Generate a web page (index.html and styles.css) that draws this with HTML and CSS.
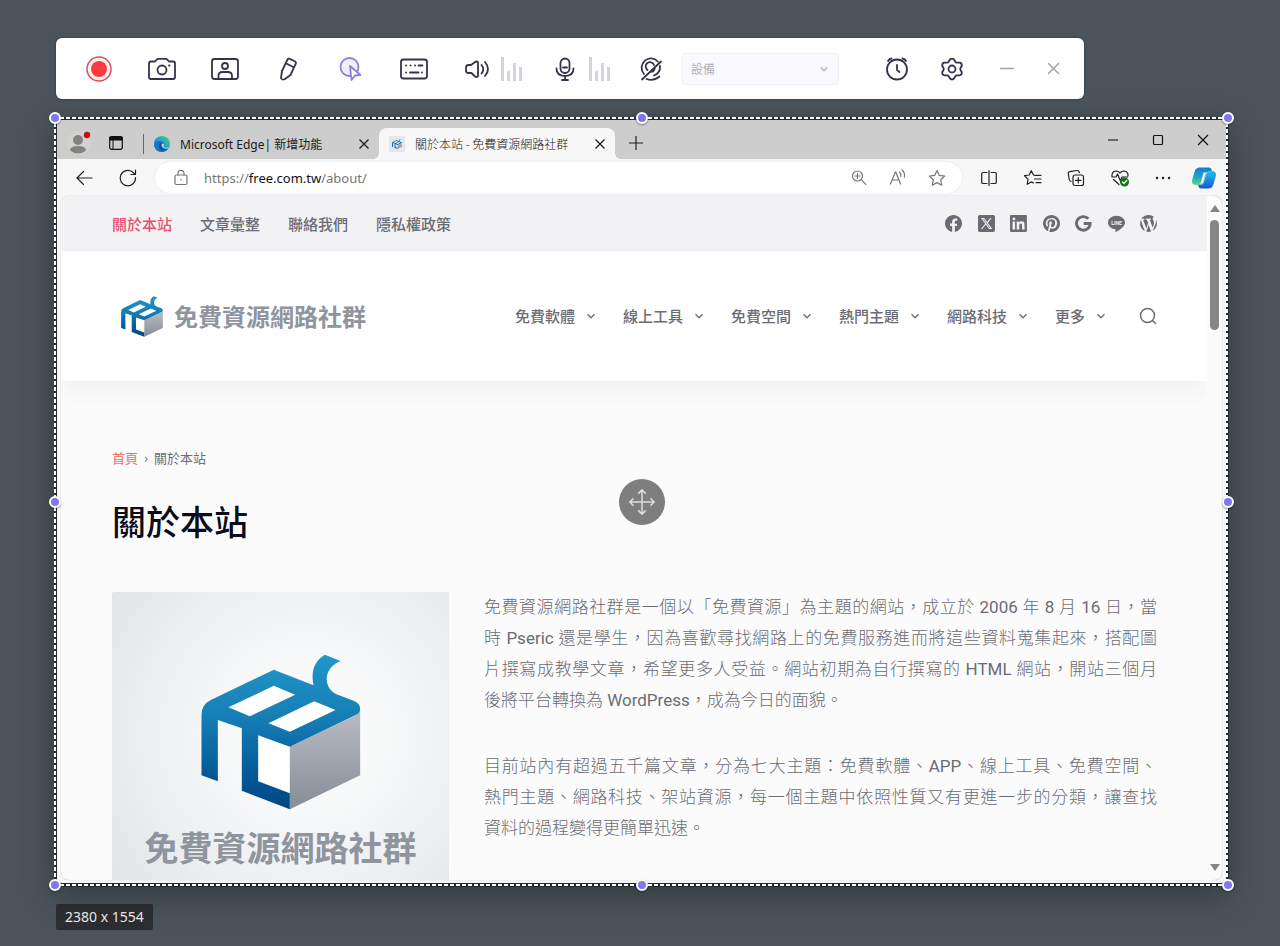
FILE: index.html
```html
<!DOCTYPE html>
<html lang="zh-Hant">
<head>
<meta charset="utf-8">
<meta name="viewport" content="width=device-width, initial-scale=1">
<title>關於本站 - 免費資源網路社群</title>
<link rel="stylesheet" href="styles.css">
</head>
<body>
<svg class="defs" aria-hidden="true">
  <defs>
    <linearGradient id="blue" x1="0" y1="0" x2="0" y2="1"><stop offset="0" stop-color="#2196cb"/><stop offset=".4" stop-color="#167fb4"/><stop offset=".85" stop-color="#005192"/><stop offset="1" stop-color="#00487f"/></linearGradient>
    <linearGradient id="silver" x1="0" y1="0" x2="0" y2="1"><stop offset="0" stop-color="#bcbdc4"/><stop offset="1" stop-color="#858d98"/></linearGradient>
    <linearGradient id="edge" x1="0" y1="1" x2="1" y2="0"><stop offset="0" stop-color="#0c59a4"/><stop offset=".5" stop-color="#1b9de2"/><stop offset="1" stop-color="#5bd64c"/></linearGradient>
    <linearGradient id="copA" x1="0" y1="0" x2="0" y2="1"><stop offset="0" stop-color="#1b78d6"/><stop offset=".5" stop-color="#17a5c4"/><stop offset="1" stop-color="#62d38b"/></linearGradient>
    <linearGradient id="copB" x1="0" y1="0" x2="0" y2="1"><stop offset="0" stop-color="#1fc5e8"/><stop offset="1" stop-color="#1b55d8"/></linearGradient>
    <symbol id="cube" viewBox="306 220 479 468">
      <path fill="#fff" d="M388 380L524 310 715 388 572 498V650L470 610V460Z"/>
      <path fill="url(#silver)" d="M572 498L772 403Q783 396 783 384V584L572 686Z"/>
      <path fill="url(#blue)" fill-rule="evenodd" d="M356 602L307 584V402Q307 372 335 358L524 267 643 314Q630 250 677 222L724 241C670 262 672 322 712 341L765 361Q783 369 783 384 783 397 770 403L572 498 477 464V602L572 638V686L428 630V443L356 418ZM524 315L388 380 452 407 588 342ZM645 362L508 428 572 453 709 388Z"/>
    </symbol>
    <symbol id="chev" viewBox="0 0 10 10"><path d="M1.500 3.200L5 6.800 8.500 3.200" fill="none" stroke="currentColor" stroke-width="1.300"/></symbol>
    <symbol id="x" viewBox="0 0 12 12"><path d="M1.500 1.500l9 9m0-9l-9 9" fill="none" stroke="currentColor" stroke-width="1.300"/></symbol>
  </defs>
</svg>

<div class="recorder" role="toolbar" aria-label="Recorder">
  <div class="tools">
    <button class="tool" aria-label="Record"><svg viewBox="0 0 30 30"><circle cx="15" cy="15" r="12" fill="#fdf1f1" stroke="#d9505a" stroke-width="1.500"/><circle cx="15" cy="15" r="8" fill="#ff3b41" stroke="none"/></svg></button>
    <button class="tool" aria-label="Screenshot"><svg viewBox="0 0 30 30"><path d="M4 7.500h4l2.500-2.700h9L22 7.500h4q2 0 2 2V23q0 2-2 2H4q-2 0-2-2V9.500q0-2 2-2z"/><circle cx="15" cy="16" r="4.500"/><path d="M22 11.500h.5"/></svg></button>
    <button class="tool" aria-label="Webcam window"><svg viewBox="0 0 30 30"><rect x="2" y="5" width="26" height="20" rx="2.500"/><circle cx="15" cy="12" r="3"/><path d="M8.500 25v-3q0-4 4-4h5.500q4 0 4 4v3"/></svg></button>
    <button class="tool" aria-label="Pen"><svg viewBox="0 0 30 30"><path d="M14.500 5.500q.8-1.300 2.300-.6l5.400 2.600q1.300.7.600 2.200L17.500 21l-5.500 4q-3 1.500-4-1l1-7zM12.800 9.300l8 4"/></svg></button>
    <button class="tool active" aria-label="Cursor effects"><svg viewBox="0 0 30 30"><circle cx="13.500" cy="13" r="9" fill="#f1effb"/><path fill="#fff" d="M14 12l10.500 9-5.500.5L15.500 26z"/></svg></button>
    <button class="tool" aria-label="Keystrokes"><svg viewBox="0 0 30 30"><rect x="2" y="5.500" width="26" height="19" rx="2.500"/><path d="M7 11.500h.1m4.400 0h.1m4.400 0h.1m3.400 0h4M7 18.500h.1m3.900 0h8.500m3.400 0h.1"/></svg></button>
    <div class="audio">
      <button class="tool" aria-label="System sound"><svg viewBox="0 0 30 30"><path d="M12.500 8.500q2.500-2 3.500 0v13.500q-1 2-3.500 0L9.500 19H6.500Q4 19 4 16.500v-2.500Q4 11 6.500 11h2.500zM19.500 11q3.500 4.300 0 8.500M23 8q6 7 0 14"/></svg></button>
      <svg class="bars" viewBox="0 0 22 24"><path d="M2.500 0v24M8.500 14v10M14.500 6v18M20.500 10v14"/></svg>
    </div>
  </div>
  <div class="tools mid">
    <div class="audio">
      <button class="tool" aria-label="Microphone"><svg viewBox="0 0 30 30"><rect x="10.500" y="4.500" width="9" height="14.500" rx="4.500"/><path d="M13 13.500h4M6.500 14.500q0 7.500 8.500 7.500t8.500-7.500M15 22v4M12 26h6"/></svg></button>
      <svg class="bars" viewBox="0 0 22 24"><path d="M2.500 0v24M8.500 14v10M14.500 6v18M20.500 10v14"/></svg>
    </div>
    <button class="tool" aria-label="Webcam off"><svg viewBox="0 0 30 30"><path d="M8 20A9.300 9.300 0 1 1 21.800 7.500M24 12q.5 7-6 9.500M11.500 16a4.300 4.300 0 1 1 6.500-5M18.800 14q-.5 3.500-4 3.800M6 25.500L25 7.500M10.500 25q7 2.500 13-2.500"/></svg></button>
  </div>
  <span class="device"><select disabled aria-label="設備"><option>設備</option></select><svg class="chev"><use href="#chev"/></svg></span>
  <div class="tools end">
    <button class="tool" aria-label="Schedule"><svg viewBox="0 0 30 30"><circle cx="15" cy="15.500" r="10"/><path d="M15 11v5l2.500 2M6 7q1-2 3.500-2.500M24 7q-1-2-3.500-2.500"/></svg></button>
    <button class="tool" aria-label="Settings"><svg viewBox="0 0 30 30"><circle cx="15" cy="15" r="3.500"/><path d="M13 5.500q2-1.800 4 0l1.300 2.300q.7 1 2 .8h2.500q2.300.7 2 3.200l-1.300 2.200q-.6 1 0 2l1.300 2.200q.3 2.500-2 3.200h-2.500q-1.300-.2-2 .8L17 24.500q-2 1.800-4 0l-1.300-2.300q-.7-1-2-.8H7.200q-2.300-.7-2-3.200L6.500 16q.6-1 0-2l-1.300-2.200q-.3-2.500 2-3.200h2.500q1.300.2 2-.8z"/></svg></button>
    <div class="wincontrols">
      <button class="tool faint" aria-label="Minimize"><svg viewBox="0 0 30 30"><path d="M8.500 14.500h13"/></svg></button>
      <button class="tool faint" aria-label="Close"><svg viewBox="0 0 30 30"><path d="M10.500 9.500l10 10m0-10l-10 10"/></svg></button>
    </div>
  </div>
</div>

<div class="frame">
  <div class="browser">
    <div class="tabstrip">
      <button class="avatar" aria-label="Profile"><svg viewBox="0 0 24 24"><circle cx="12" cy="12" r="12" fill="#d3d2d0"/><circle cx="11" cy="9" r="5" fill="#85827e"/><path d="M3 19.500q0-4.500 8-4.500t8 4.500q-3.500 3-8 3t-8-3z" fill="#85827e"/><circle cx="20" cy="4" r="3.200" fill="#c50f1f"/></svg></button>
      <button class="ico" aria-label="Workspaces"><svg viewBox="0 0 16 16"><rect x="1.700" y="1.700" width="12.600" height="12.600" rx="2" fill="none" stroke="#111" stroke-width="1.200"/><path d="M1.700 2h12.600v3H1.700z" fill="#111" stroke="#111"/><path d="M5 5v9" stroke="#111"/></svg></button>
      <div class="tab">
        <svg class="fav" viewBox="0 0 16 16"><circle cx="8" cy="8" r="8" fill="url(#edge)"/><path d="M.3 8Q3 3.800 7.500 5.200 10.500 6.500 10 9 9 10.300 10 11q3 1.200 5.300-.8Q13 15.800 8 16 0 15.500.3 8z" fill="#1675c5"/><path d="M5 10q0-3 3-3.500Q6.500 9 8 11t6 1.500Q9 16 6.500 13.500 5 12 5 10z" fill="#0d4fa0"/><path d="M8 7.500q2.500 0 2 2-1 1.300 0 1.700 2.500 1 5-.5l-1 1.800Q10 13.500 8 11 7 9 8 7.500z" fill="#cdcdcd"/></svg>
        <span class="tabname">Microsoft Edge| 新增功能</span>
        <button class="close" aria-label="Close tab"><svg><use href="#x"/></svg></button>
      </div>
      <div class="tab current">
        <span class="fav cubefav"><svg><use href="#cube"/></svg></span>
        <span class="tabname">關於本站 - 免費資源網路社群</span>
        <button class="close" aria-label="Close tab"><svg><use href="#x"/></svg></button>
      </div>
      <button class="ico plus" aria-label="New tab"><svg viewBox="0 0 16 16"><path d="M8 1v14M1 8h14" stroke="#222" stroke-width="1.200"/></svg></button>
      <div class="syscontrols">
        <button class="ico" aria-label="Minimize"><svg viewBox="0 0 16 16"><path d="M3 8h10" stroke="#333" stroke-width="1.300"/></svg></button>
        <button class="ico" aria-label="Maximize"><svg viewBox="0 0 16 16"><rect x="3.500" y="3.500" width="9" height="9" rx="1" fill="none" stroke="#111" stroke-width="1.200"/></svg></button>
        <button class="ico" aria-label="Close"><svg viewBox="0 0 16 16"><path d="M3 3l10 10m0-10L3 13" stroke="#111" stroke-width="1.200"/></svg></button>
      </div>
    </div>

    <div class="addressrow">
      <button class="nav" aria-label="Back"><svg viewBox="0 0 20 20"><path d="M18 10H3M9.500 3.500L3 10l6.500 6.500"/></svg></button>
      <button class="nav" aria-label="Reload"><svg viewBox="0 0 20 20"><path d="M17.500 9.500A7.700 7.700 0 1 1 14.500 4L17 6M17.500 2v4.500H13"/></svg></button>
      <div class="omnibox">
        <svg class="gray" viewBox="0 0 20 20"><rect x="4" y="7" width="12" height="9.500" rx="1.500"/><path d="M7 7V5.500q0-3.200 3-3.200t3 3.200V7M9.800 11.700h.4"/></svg>
        <div class="url" role="textbox" contenteditable="true" spellcheck="false" aria-label="Address">https://<b>free.com.tw</b>/about/</div>
        <div class="pageactions">
          <button class="nav gray" aria-label="Zoom"><svg viewBox="0 0 20 20"><circle cx="8.500" cy="8" r="5"/><path d="M12.200 11.700l4.600 4.600M8.500 5.500v5M6 8h5"/></svg></button>
          <button class="nav gray" aria-label="Read aloud"><svg viewBox="0 0 20 20"><path d="M2.500 16L7.300 4h.5l4.700 12M4.300 12h6.500M11.500 4q2 2 1.300 4.500M14 2q3.500 3.300 2.300 7.300"/></svg></button>
          <button class="nav gray" aria-label="Favorite"><svg viewBox="0 0 20 20"><path d="M10 2.500l2.300 4.900 5.400.7-4 3.700 1 5.400-4.700-2.600-4.700 2.600 1-5.400-4-3.700 5.400-.7z"/></svg></button>
        </div>
      </div>
      <div class="extensions">
        <button class="nav" aria-label="Split screen"><svg viewBox="0 0 20 20"><path d="M8 4.500H4q-1.300 0-1.300 1.300v8.400q0 1.300 1.300 1.300h4M12 4.500h4q1.300 0 1.300 1.300v8.400q0 1.300-1.300 1.300h-4M10 2.500v15"/></svg></button>
        <button class="nav" aria-label="Favorites"><svg viewBox="0 0 20 20"><path d="M13 7.300L10.500 7 8.300 2.700 6.200 7l-4.700.7L5 11.100l-.8 5.200 4.100-2.400 2 1M11.500 7.300h6.500M11.500 11h6.500M13 14.700h5"/></svg></button>
        <button class="nav" aria-label="Collections"><svg viewBox="0 0 20 20"><rect x="7" y="7" width="10.500" height="10.500" rx="2"/><path d="M12.300 9.500v5.500M9.500 12.300H15M5 13.500Q3.500 13 3.200 11.500L2.300 5.700Q2 4 3.700 3.700L11 2.500q1.700-.2 2.200 1.500l.2.700"/></svg></button>
        <button class="nav" aria-label="Performance"><svg viewBox="0 0 20 20"><path d="M2 8.500Q1.500 3.500 6 3q2.500 0 4 2 1.500-2 4-2 4.500.5 4 5M2 9h4l1.500-3 3 7L12 9h5.500M3.500 11.500l5.500 5"/><circle cx="14.500" cy="14" r="4.500" fill="#13741a" stroke="none"/><path d="M12.500 14l1.500 1.500 2.800-3" stroke="#fff"/></svg></button>
        <button class="nav" aria-label="More"><svg viewBox="0 0 20 20"><path class="dots" d="M4 10h.1M10 10h.1M16 10h.1"/></svg></button>
      </div>
      <button class="copilot" aria-label="Copilot"><svg viewBox="0 0 24 24"><path fill="url(#copA)" d="M8 1.500h9q2 0 2.500 2l.5 2h-3q-2 0-2.700 2L11.500 16q-.8 3-3.500 3H4.500Q0 19 0 15.500q0-1.300 1-4.500l1.800-6Q4 1.500 8 1.500z"/><path fill="url(#copB)" d="M16 22.500H9q-2 0-2.500-2l-.3-1.500h2.500q2 0 2.800-2l3-9.500q.8-2.500 3.500-2.500h2Q24 5 24 8.500q0 1.300-1 4.500l-1.800 6q-1.200 3.500-5.200 3.500z"/><path fill="#f3fbff" d="M11.500 6.500h4q-1.300 0-2 2l-2.300 7.500q-.5 1.500-2 1.500H7q1.500 0 2-1.500z"/></svg></button>
    </div>

    <div class="viewport">
      <div class="page">
        <div class="topbar">
          <nav class="toplinks"><a class="here" href="#">關於本站</a><a href="#">文章彙整</a><a href="#">聯絡我們</a><a href="#">隱私權政策</a></nav>
          <div class="social">
            <a href="#" aria-label="Facebook"><svg viewBox="0 0 20 20"><path d="M20,10.100c0-5.500-4.500-10-10-10S0,4.500,0,10.100c0,5,3.700,9.100,8.400,9.900v-7H5.900v-2.900h2.500V7.900C8.400,5.400,9.900,4,12.200,4c1.100,0,2.200,0.200,2.200,0.200v2.500h-1.300c-1.200,0-1.600,0.800-1.600,1.600v1.900h2.800L13.900,13h-2.300v7C16.300,19.200,20,15.100,20,10.100z"/></svg></a>
            <a href="#" aria-label="X"><svg viewBox="0 0 20 20"><path fill-rule="evenodd" d="M2 0h16q2 0 2 2v16q0 2-2 2H2q-2 0-2-2V2Q0 0 2 0zM3.500 3.500l5 6.800-5 6.200H5l4.200-5.200 3.800 5.200h3.800l-5.300-7.200L16 3.500h-1.500l-3.800 4.800-3.500-4.800zM5.800 4.700h.8l7.900 10.600h-.9z"/></svg></a>
            <a href="#" aria-label="LinkedIn"><svg viewBox="0 0 20 20"><path d="M18.600,0H1.400C0.600,0,0,0.600,0,1.400v17.100C0,19.400,0.600,20,1.400,20h17.100c0.800,0,1.400-0.600,1.400-1.400V1.400C20,0.600,19.400,0,18.600,0z M6,17.100h-3V7.600h3L6,17.100z M4.600,6.300c-1,0-1.700-0.800-1.700-1.700s0.800-1.700,1.700-1.700c0.900,0,1.700,0.800,1.700,1.700C6.300,5.500,5.500,6.300,4.600,6.300z M17.200,17.100h-3v-4.600c0-1.100,0-2.500-1.500-2.500c-1.500,0-1.800,1.200-1.800,2.500v4.700h-3V7.600h2.800v1.300h0c0.400-0.800,1.400-1.500,2.800-1.500c3,0,3.600,2,3.600,4.500V17.100z"/></svg></a>
            <a href="#" aria-label="Pinterest"><svg viewBox="0 0 20 20"><path d="M10,0C4.500,0,0,4.500,0,10c0,4.100,2.500,7.600,6,9.200c0-0.700,0-1.500,0.200-2.300c0.200-0.800,1.300-5.400,1.300-5.400s-0.300-0.600-0.300-1.600c0-1.500,0.900-2.600,1.900-2.600c0.900,0,1.300,0.700,1.300,1.500c0,0.900-0.600,2.300-0.900,3.500c-0.300,1.100,0.500,1.900,1.600,1.900c1.900,0,3.200-2.400,3.200-5.300c0-2.200-1.500-3.800-4.200-3.800c-3,0-4.900,2.300-4.900,4.800c0,0.900,0.300,1.500,0.700,2C6,12,6.100,12.100,6,12.400c0,0.200-0.200,0.600-0.200,0.800c-0.100,0.300-0.300,0.300-0.500,0.300c-1.400-0.600-2-2.100-2-3.800c0-2.800,2.400-6.200,7.100-6.200c3.800,0,6.300,2.800,6.300,5.700c0,3.900-2.200,6.900-5.400,6.900c-1.100,0-2.100-0.600-2.400-1.200c0,0-0.600,2.300-0.700,2.700c-0.200,0.800-0.600,1.500-1,2.100C8.100,19.900,9,20,10,20c5.500,0,10-4.500,10-10C20,4.500,15.500,0,10,0z"/></svg></a>
            <a href="#" aria-label="Google"><svg viewBox="0 0 20 20"><path d="M15.700 4.500A8 8 0 1 0 17.800 10H10.300" fill="none" stroke="currentColor" stroke-width="3.400"/></svg></a>
            <a href="#" aria-label="LINE"><svg viewBox="0 0 20 20"><path d="M10 1C4.500 1 0 4.500 0 9c0 4 3.500 7 8 7.600 1.200.2.900 1.400.7 2.600-.1.500 0 1 .8.600C13.500 17.500 20 13.500 20 9c0-4.500-4.500-8-10-8z"/><text x="10" y="11.200" text-anchor="middle" class="line-mark">LINE</text></svg></a>
            <a href="#" aria-label="WordPress"><svg viewBox="1 1 18 18"><path d="M7.780 15.370L4.370 6.220c.55-.02 1.170-.08 1.170-.08.5-.06.44-1.130-.06-1.110 0 0-1.450.11-2.370.11-.18 0-.37 0-.58-.01C4.120 2.690 6.870 1.110 10 1.110c2.330 0 4.450.87 6.050 2.340-.68-.11-1.650.39-1.650 1.580 0 .74.45 1.360.9 2.100.35.61.55 1.360.55 2.460 0 1.490-1.400 5-1.400 5l-3.030-8.370c.54-.02.82-.17.82-.17.5-.05.44-1.250-.06-1.220 0 0-1.440.12-2.380.12-.87 0-2.330-.12-2.330-.12-.5-.03-.56 1.200-.06 1.220l.92.080 1.260 3.410zM17.410 10c.24-.64.74-1.870.43-4.250.7 1.290 1.050 2.710 1.050 4.250 0 3.290-1.730 6.240-4.400 7.780.97-2.590 1.940-5.200 2.920-7.780zM6.100 18.090C3.120 16.650 1.110 13.530 1.110 10c0-1.300.23-2.480.72-3.590C3.250 10.300 4.670 14.200 6.100 18.090zm4.030-6.630l2.580 6.980c-.86.29-1.760.45-2.710.45-.79 0-1.570-.11-2.290-.33.81-2.380 1.620-4.740 2.420-7.100z"/></svg></a>
          </div>
        </div>
        <header class="header">
          <a class="brand" href="#"><svg><use href="#cube"/></svg><span>免費資源網路社群</span></a>
          <nav class="menu">
            <a href="#">免費軟體<svg class="chev"><use href="#chev"/></svg></a>
            <a href="#">線上工具<svg class="chev"><use href="#chev"/></svg></a>
            <a href="#">免費空間<svg class="chev"><use href="#chev"/></svg></a>
            <a href="#">熱門主題<svg class="chev"><use href="#chev"/></svg></a>
            <a href="#">網路科技<svg class="chev"><use href="#chev"/></svg></a>
            <a href="#">更多<svg class="chev"><use href="#chev"/></svg></a>
            <button class="search" aria-label="Search"><svg viewBox="0 0 18 18"><circle cx="8.500" cy="8.500" r="7"/><path d="M13.500 13.500l3.500 3.500"/></svg></button>
          </nav>
        </header>
        <main class="main">
          <nav class="crumbs"><a href="#">首頁</a><span>›</span><span>關於本站</span></nav>
          <h1>關於本站</h1>
          <div class="columns">
            <figure class="picture"><svg><use href="#cube"/></svg><figcaption>免費資源網路社群</figcaption></figure>
            <article>
              <p><span class="row">免費資源網路社群是一個以「免費資源」為主題的網站，成立於 <b>2006</b> 年 <b>8</b> 月 <b>16</b> 日，當</span><span class="row">時 <b>Pseric</b> 還是學生，因為喜歡尋找網路上的免費服務進而將這些資料蒐集起來，搭配圖</span><span class="row">片撰寫成教學文章，希望更多人受益。網站初期為自行撰寫的 <b>HTML</b> 網站，開站三個月</span><span class="row last">後將平台轉換為 <b>WordPress</b>，成為今日的面貌。</span></p>
              <p><span class="row">目前站內有超過五千篇文章，分為七大主題：免費軟體、<b>APP</b>、線上工具、免費空間、</span><span class="row">熱門主題、網路科技、架站資源，每一個主題中依照性質又有更進一步的分類，讓查找</span><span class="row last">資料的過程變得更簡單迅速。</span></p>
            </article>
          </div>
        </main>
      </div>
      <div class="scrollbar" aria-hidden="true"><i class="up"></i><i class="thumb"></i><i class="down"></i></div>
    </div>
  </div>
  <i class="handle t l"></i><i class="handle t c"></i><i class="handle t r"></i>
  <i class="handle m l"></i><i class="handle m r"></i>
  <i class="handle b l"></i><i class="handle b c"></i><i class="handle b r"></i>
  <button class="move" aria-label="Move"><svg viewBox="0 0 30 30"><path d="M15 2v26M2 15h26M11 6l4-4 4 4M11 24l4 4 4-4M6 11l-4 4 4 4M24 11l4 4-4 4"/></svg></button>
</div>
<div class="size">2380 x 1554</div>
</body>
</html>
```
FILE: styles.css
```css
* { box-sizing: border-box; }

body {
  margin: 0;
  height: 100vh;
  padding: 38px 51px 16px 54px;
  display: flex;
  flex-direction: column;
  align-items: flex-start;
  overflow: hidden;
  background: #4b545b;
  color: #6c6c74;
  font-family: "Noto Sans", "Noto Sans CJK TC", sans-serif;
}

button { margin: 0; padding: 0; border: 0; background: none; color: inherit; font: inherit; flex: none; }
a { color: inherit; text-decoration: none; }
svg { display: block; flex: none; }
.defs { position: absolute; width: 0; height: 0; }
.chev { width: 10px; height: 10px; }

/* Recorder bar */
.recorder {
  display: flex;
  align-items: center;
  height: 61px;
  margin-left: 2px;
  padding: 0 16px 0 28px;
  background: #fff;
  border-radius: 6px;
  box-shadow: 0 0 3px rgba(0, 0, 0, .35);
  flex: none;
}
.tools { display: flex; align-items: center; gap: 33px; }
.tools.mid { gap: 26px; margin-left: 28px; }
.tools.end { gap: 25px; margin-left: 43px; }
.audio { display: flex; align-items: center; gap: 8px; }
.wincontrols { display: flex; gap: 16px; }
.tool { width: 30px; height: 30px; }
.tool svg { width: 30px; height: 30px; fill: none; stroke: #37324a; stroke-width: 1.8; stroke-linecap: round; stroke-linejoin: round; }
.tool.active svg { stroke: #8b7fe0; }
.tool.faint svg { stroke: #a3a2ab; stroke-width: 1.5; }
.bars { width: 22px; height: 24px; fill: none; stroke: #d4d3dc; stroke-width: 3; }
.device { display: grid; align-items: center; width: 157px; height: 32px; margin-left: 16px; }
.device > * { grid-area: 1 / 1; }
.device select {
  width: 100%;
  height: 32px;
  padding: 0 8px;
  appearance: none;
  border: 1px solid #f0eff5;
  border-radius: 3px;
  background: #faf9fe;
  color: #b1b0b7;
  opacity: 1;
  font: 12px "Noto Sans CJK TC", sans-serif;
}
.device .chev { justify-self: end; margin-right: 10px; color: #b6b5be; }

/* Selection frame */
.frame {
  position: relative;
  display: flex;
  flex: 1;
  min-height: 0;
  align-self: stretch;
  margin-top: 18px;
  padding: 3px 3px 4px;
  background:
    repeating-linear-gradient(90deg, #fff 0 4px, #262b30 4px 6px) 0 0 / 100% 2px no-repeat,
    repeating-linear-gradient(90deg, #fff 0 4px, #262b30 4px 6px) 0 calc(100% - 1px) / 100% 2px no-repeat,
    repeating-linear-gradient(#fff 0 4px, #262b30 4px 6px) 0 0 / 2px 100% no-repeat,
    repeating-linear-gradient(#fff 0 4px, #262b30 4px 6px) calc(100% - 1px) 0 / 2px 100% no-repeat,
    #262b30;
  box-shadow: 0 10px 30px rgba(0, 0, 0, .3);
}
.handle {
  position: absolute;
  width: 12px;
  height: 12px;
  border: 2px solid #fff;
  border-radius: 50%;
  background: #8375ea;
  box-shadow: 0 1px 2px rgba(0, 0, 0, .4);
  transform: translate(-50%, -50%);
}
.t { top: 1px; }
.m { top: 50%; }
.b { top: calc(100% - 2px); }
.l { left: 1px; }
.c { left: 50%; }
.r { left: calc(100% - 1px); }
.move {
  position: absolute;
  top: 50%;
  left: 50%;
  display: grid;
  place-items: center;
  width: 46px;
  height: 46px;
  border-radius: 50%;
  background: #7e7e7e;
  transform: translate(-50%, -50%);
}
.move svg { width: 28px; height: 28px; fill: none; stroke: #ddd; stroke-width: 1.6; }

/* Browser */
.browser {
  display: flex;
  flex-direction: column;
  flex: 1;
  min-width: 0;
  background: #f7f7f7;
}
.tabstrip { display: flex; align-items: flex-end; height: 39px; padding-left: 10px; background: #cdcdcd; flex: none; }
.tabstrip > button { margin-bottom: 4px; }
.avatar, .avatar svg { width: 24px; height: 24px; }
.ico { display: grid; place-items: center; width: 24px; height: 24px; }
.ico svg { width: 16px; height: 16px; }
.avatar + .ico { margin-left: 13px; }
.tab {
  position: relative;
  display: flex;
  align-items: center;
  height: 31px;
  width: 236px;
  padding: 0 9px 0 10px;
  color: #1b1b1b;
  font-size: 12px;
}
.tab:not(.current) { margin-left: 15px; padding-left: 11px; background: linear-gradient(#666, #666) 0 50% / 1px 20px no-repeat; }
.tab.current { background: #f7f7f7; border-radius: 8px 8px 0 0; font-family: "Noto Sans CJK TC", sans-serif; font-weight: 300; }
.tab.current::before, .tab.current::after { content: ""; position: absolute; bottom: 0; width: 6px; height: 6px; }
.tab.current::before { right: 100%; background: radial-gradient(circle at 0 0, transparent 6px, #f7f7f7 6px); }
.tab.current::after { left: 100%; background: radial-gradient(circle at 100% 0, transparent 6px, #f7f7f7 6px); }
.fav { width: 16px; height: 16px; }
.cubefav { display: grid; place-items: center; background: #e4e8ee; flex: none; }
.cubefav svg { width: 10px; height: 10px; }
.tabname { flex: 1; margin-left: 10px; white-space: nowrap; }
.close { display: grid; place-items: center; width: 12px; height: 12px; }
.close svg { width: 12px; height: 12px; }
.plus { margin-left: 9px; }
.syscontrols { display: flex; gap: 21px; margin: 0 11px 7px auto; }

.addressrow { display: flex; align-items: center; height: 37px; padding: 0 10px 0 17px; flex: none; }
.nav, .nav svg, .omnibox > svg { width: 20px; height: 20px; }
.nav svg, .omnibox > svg { fill: none; stroke: #222; stroke-width: 1.2; stroke-linejoin: round; stroke-linecap: round; }
.addressrow > .nav + .nav { margin-left: 24px; }
.nav.gray svg, .omnibox > svg.gray { stroke: #777; }
.dots { stroke-width: 2.4; }
.omnibox {
  display: flex;
  align-items: center;
  flex: 1;
  height: 31px;
  margin-left: 17px;
  padding: 0 15px 0 16px;
  border-radius: 16px;
  background: #fff;
  box-shadow: 0 0 2px rgba(0, 0, 0, .1);
}
.url { flex: 1; margin-left: 13px; color: #767676; font-size: 13px; line-height: 20px; outline: 0; }
.url b { color: #111; font-weight: 400; }
.pageactions { display: flex; gap: 19px; }
.extensions { display: flex; justify-content: space-between; width: 194px; margin-left: 17px; }
.copilot { margin-left: 19px; }
.copilot svg { width: 24px; height: 24px; }

.viewport {
  display: flex;
  flex: 1;
  min-height: 0;
  margin: 0 4px 3px;
  overflow: hidden;
  border-radius: 8px;
  background: #fbfbfb;
  box-shadow: 0 0 1px rgba(0, 0, 0, .4);
  font-family: "Noto Sans CJK TC", sans-serif;
}
.page { flex: 1; min-width: 0; overflow: hidden; }
.scrollbar { display: flex; flex-direction: column; align-items: center; width: 15px; padding: 9px 0; }
.up, .down { border: 5px solid transparent; border-top-width: 0; border-bottom: 7px solid #858585; }
.down { margin-top: auto; border-bottom-width: 0; border-top: 7px solid #858585; }
.thumb { width: 9px; height: 110px; margin-top: 8px; border-radius: 5px; background: #868686; }

/* Website */
.topbar, .header { display: flex; align-items: center; justify-content: space-between; padding: 0 50px 0 51px; }
.topbar { height: 55px; background: #f2f2f5; }
.toplinks { display: flex; gap: 28px; font-size: 15px; font-weight: 500; line-height: 22px; }
.toplinks .here { color: #e9506e; }
.social { display: flex; justify-content: space-between; width: 212px; color: #6c6b73; }
.social svg { width: 17px; height: 17px; fill: currentColor; }
.line-mark { fill: #f2f2f5; font: 700 6px Roboto, sans-serif; }
.header {
  position: relative;
  height: 130px;
  background: #fff;
  box-shadow: 0 10px 20px rgba(44, 62, 80, .05);
}
.brand { display: flex; align-items: center; gap: 11px; padding-left: 9px; color: #90949d; font-size: 24px; font-weight: 700; line-height: 40px; white-space: nowrap; }
.brand svg { width: 42px; height: 41px; }
.menu { display: flex; align-items: center; gap: 27px; font-size: 15px; font-weight: 500; line-height: 22px; white-space: nowrap; }
.menu a { display: flex; align-items: center; gap: 11px; }
.search { margin-left: 6px; }
.search svg { width: 18px; height: 18px; fill: none; stroke: #6c6c74; stroke-width: 1.5; }
.main { padding: 67px 50px 0 51px; }
.crumbs { display: flex; gap: 6px; font-size: 13px; line-height: 20px; }
.crumbs a { color: #f0705f; }
h1 { margin: 31px 0 49px; color: #0b0b1a; font-size: 34px; font-weight: 500; line-height: 44px; }
.columns { display: grid; grid-template-columns: 337fr 673fr; gap: 35px; align-items: start; }
.picture {
  display: flex;
  flex-direction: column;
  align-items: center;
  gap: 12px;
  aspect-ratio: 1;
  margin: 0;
  padding-top: 62px;
  border-radius: 2px;
  background: radial-gradient(circle at 58% 42%, #fff 0, #f5f6f7 35%, #dde1e4 100%);
}
.picture svg { width: 160px; height: 156px; }
.picture figcaption { color: #8f949d; font-size: 34px; font-weight: 700; line-height: 50px; white-space: nowrap; }
article { font-family: Roboto, "Noto Sans CJK TC", sans-serif; font-size: 17px; line-height: 31px; }
article p { margin: 0 0 35px; }
article b { font-weight: 400; }
.row { display: block; text-align: justify; text-align-last: justify; white-space: nowrap; font-weight: 300; }
.row.last { text-align-last: start; }

.size {
  margin: 17px 0 0 2px;
  padding: 0 9px;
  border-radius: 2px;
  background: #2c2e31;
  color: #eee;
  font-size: 14px;
  line-height: 26px;
  flex: none;
}
```
